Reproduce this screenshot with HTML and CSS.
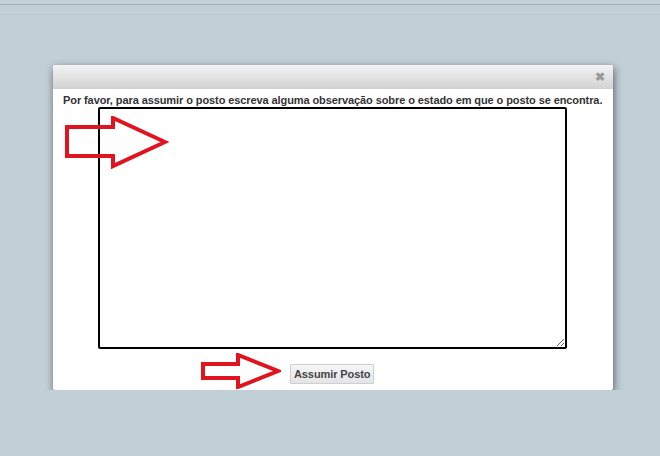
FILE: index.html
```html
<!DOCTYPE html>
<html lang="pt">
<head>
    <meta charset="UTF-8">
    <meta name="viewport" content="width=device-width, initial-scale=1.0">
    <title>Assumir Posto</title>
    <link rel="stylesheet" href="styles.css">
</head>
<body>
    <div class="topbar"></div>
    <div class="subbar"></div>

    <div class="dialog">
        <div class="titlebar">
            <span class="close">&#10006;</span>
        </div>
        <div class="content">
            <p class="msg">Por favor, para assumir o posto escreva alguma observação sobre o estado em que o posto se encontra.</p>
            <textarea class="obs"></textarea>
            <div class="actions">
                <button type="button" class="btn">Assumir Posto</button>
            </div>
        </div>

        <svg class="arrow arrow-text" width="104" height="54" viewBox="0 0 104 54">
            <polygon points="2,11 48,11 48,2 100,26 48,50 48,40 2,40" />
        </svg>
        <svg class="arrow arrow-btn" width="80" height="36" viewBox="0 0 80 36">
            <polygon points="2,11 37,11 37,2 77,18 37,34 37,25 2,25" />
        </svg>
    </div>
</body>
</html>
```

FILE: styles.css
```css
body {
    margin: 0;
    background-color: #c1cfd6;
    font-family: "Liberation Sans", Arial, sans-serif;
}
.topbar {
    height: 4px;
    border-bottom: 1px solid #9fb0b8;
    background: #c3d0d7;
}
.subbar {
    height: 9px;
    border-bottom: 1px solid #b7c6cd;
}
.dialog {
    position: relative;
    width: 560px;
    margin: 50px 0 0 53px;
    background: #fff;
    border-radius: 2px;
    box-shadow: 1px 3px 8px rgba(0,0,0,0.55);
}
.titlebar {
    height: 24px;
    background: linear-gradient(#f3f3f3, #d2d2d2);
    border-radius: 2px 2px 0 0;
    text-align: right;
}
.close {
    display: inline-block;
    margin: 5px 8px 0 0;
    font-size: 12px;
    font-weight: bold;
    color: #9a9a9a;
}
.content {
    padding: 5px 0 6px;
}
.msg {
    margin: 0 0 1px 10px;
    font-size: 11px;
    font-weight: bold;
    letter-spacing: -0.09px;
    color: #333;
    line-height: 12px;
}
.obs {
    display: block;
    box-sizing: border-box;
    width: 469px;
    height: 242px;
    margin: 0 0 0 45px;
    border: 2px solid #000;
    border-radius: 2px;
    resize: both;
}
.actions {
    margin: 15px 0 0 237px;
}
.btn {
    height: 20px;
    padding: 0 3px;
    font-family: "Liberation Sans", Arial, sans-serif;
    font-size: 11px;
    font-weight: bold;
    letter-spacing: -0.1px;
    color: #444;
    background: linear-gradient(#f6f6f6, #e4e4e4);
    border: 1px solid #cfcfcf;
    border-radius: 1px;
}
.arrow {
    position: absolute;
}
.arrow polygon {
    fill: none;
    stroke: #e0141e;
    stroke-width: 4;
    stroke-linejoin: miter;
}
.arrow-text {
    left: 12px;
    top: 51px;
}
.arrow-btn {
    left: 148px;
    top: 288px;
}
```
